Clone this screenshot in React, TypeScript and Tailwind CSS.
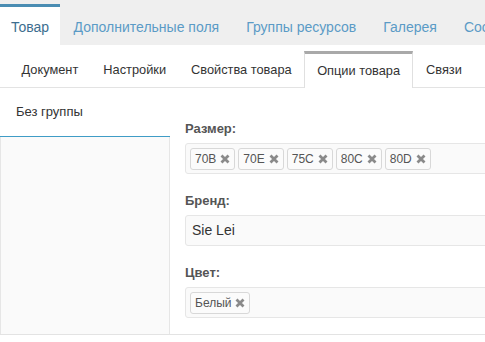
import React from "react";

const X = () => (
  <svg width="10" height="10" viewBox="0 0 10 10" className="ml-[4px]">
    <path d="M1.5 1.5 L8.5 8.5 M8.5 1.5 L1.5 8.5" stroke="#8a8a8a" strokeWidth="2.8" strokeLinecap="butt" />
  </svg>
);

const Tag = ({ t }: { t: string }) => (
  <span className="flex h-[22px] items-center rounded-[3px] border border-[#d8d8d8] bg-[#fbfbfb] px-[4px] text-[12px] text-[#555]">
    {t}
    <X />
  </span>
);

export default function App() {
  const top = ["Дополнительные поля", "Группы ресурсов", "Галерея", "Сообщения"];
  const sub = ["Документ", "Настройки", "Свойства товара"];
  return (
    <div className="h-[342px] w-[485px] overflow-hidden bg-white" style={{ fontFamily: '"Liberation Sans", Arial, sans-serif' }}>
      <div className="flex h-[45px] items-end overflow-hidden whitespace-nowrap bg-[#efefef] text-[14px]">
        <div className="flex h-[41px] shrink-0 items-center border-t-[3px] border-[#4a8db3] bg-white px-[11px] pt-[3px] text-[#3d6e8f]">Товар</div>
        {top.map((t) => (
          <div key={t} className="flex h-[41px] shrink-0 items-center px-[13.5px] pt-[6px] text-[#5b9bc6]">{t}</div>
        ))}
      </div>
      <div className="flex h-[43px] items-end whitespace-nowrap border-b border-[#e3e3e3] pl-[9px] text-[12.8px] text-[#333]">
        {sub.map((t) => (
          <div key={t} className="flex h-[36px] items-center px-[12.5px] pt-[2px]">{t}</div>
        ))}
        <div className="mb-[-1px] flex h-[37px] items-center border-x border-t-[3px] border-x-[#e0e0e0] border-t-[#a9a9a9] bg-white px-[12px]">Опции товара</div>
        <div className="flex h-[36px] items-center px-[13px] pt-[2px]">Связи</div>
      </div>
      <div className="flex h-[247px] border-b border-[#e3e3e3]">
        <div className="flex w-[170px] shrink-0 flex-col">
          <div className="flex h-[49px] items-start border-b border-[#3f9cc6] bg-white pl-[16px] pt-[14px] text-[13px] text-[#333]">Без группы</div>
          <div className="flex-1 border-l border-r border-[#e6e6e6] bg-[#fafafa]" />
        </div>
        <div className="flex-1 pl-[15px] pt-[32px]">
          <div className="text-[13px] font-bold leading-[18px] text-[#555]">Размер:</div>
          <div className="mt-[5px] flex h-[31px] w-[320px] items-center gap-[3px] rounded-[3px] border border-[#e6e6e6] bg-[#fafafa] pl-[4px]">
            {["70B", "70E", "75C", "80C", "80D"].map((t) => <Tag key={t} t={t} />)}
          </div>
          <div className="mt-[18px] text-[13px] font-bold leading-[18px] text-[#555]">Бренд:</div>
          <div className="mt-[5px] flex h-[31px] w-[320px] items-center rounded-[3px] border border-[#e6e6e6] bg-[#fafafa] pl-[6px] text-[14px] text-[#333]">Sie Lei</div>
          <div className="mt-[18px] text-[13px] font-bold leading-[18px] text-[#555]">Цвет:</div>
          <div className="mt-[5px] flex h-[31px] w-[320px] items-center rounded-[3px] border border-[#e6e6e6] bg-[#fafafa] pl-[4px]">
            <Tag t="Белый" />
          </div>
        </div>
      </div>
    </div>
  );
}
